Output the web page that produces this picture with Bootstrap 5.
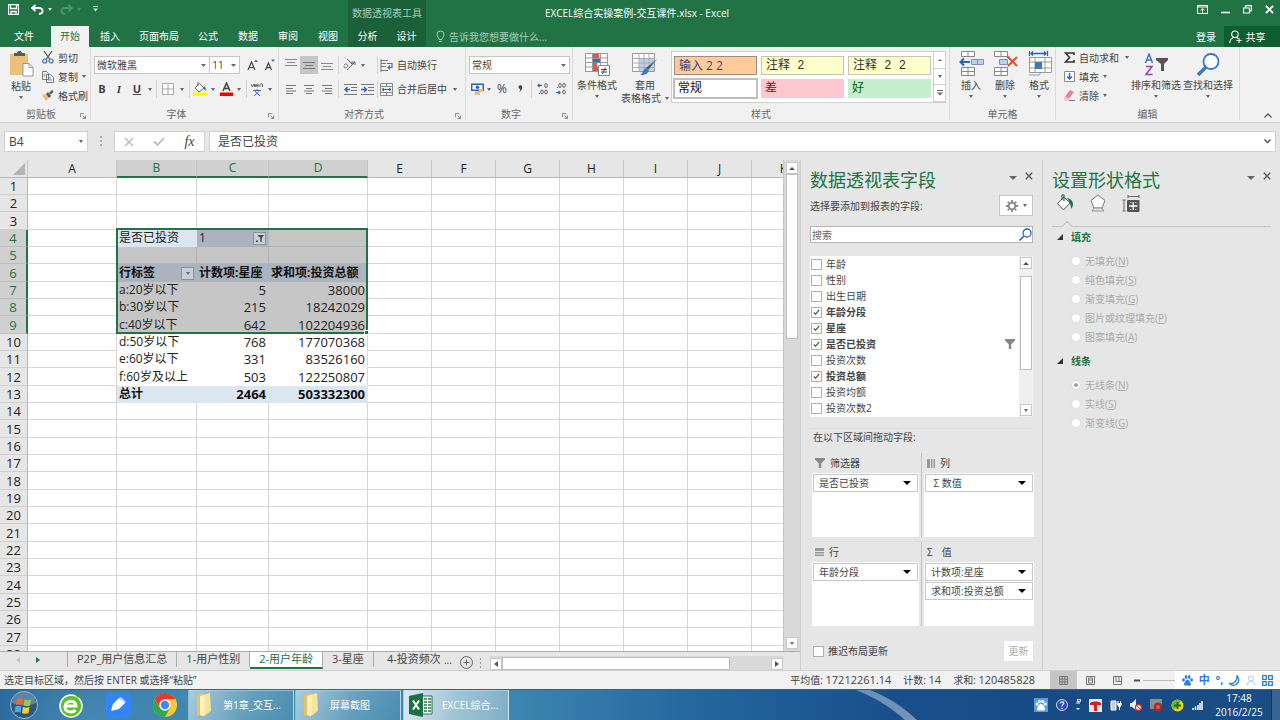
<!DOCTYPE html>
<html lang="zh-CN">
<head>
<meta charset="utf-8">
<meta name="viewport" content="width=device-width, initial-scale=1">
<title>EXCEL综合实操案例-交互课件.xlsx - Excel</title>
<link href="https://cdn.jsdelivr.net/npm/bootstrap@5.3.0/dist/css/bootstrap.min.css" rel="stylesheet">
<style>
:root{--xl:#217346;--xl-dark:#0f5c30;--ink:#444;--pane:#e6e6e6;--rib:#f1f1f1;--rule:#d2d2d2}
body{font-family:"Open Sans","Noto Sans CJK SC",sans-serif;font-size:10px;line-height:16px;color:var(--ink);background:var(--pane)}
.app{height:100vh;min-width:1280px}
.flex-none{flex:none}
svg{display:block;flex:none}
.btn{--bs-btn-padding-x:0px;--bs-btn-padding-y:0px;--bs-btn-font-size:10px;--bs-btn-line-height:16px;--bs-btn-border-width:0px;--bs-btn-border-radius:0px;--bs-btn-color:var(--ink);display:inline-flex;align-items:center;justify-content:center;flex:none}
.caret{width:0;height:0;border:2px solid transparent;border-top:3px solid #666;border-bottom:0;flex:none;margin:0 auto}
.caret-lg{border-width:4px 4px 0}
.s8{width:8px}.s10{width:10px}.s16{width:16px}.s18{width:18px}
.s8,.s10,.s16,.s18{flex:none}
.sep{width:5px;height:18px;flex:none;background:linear-gradient(#d5d5d5,#d5d5d5) 2px 0/1px 100% no-repeat}

/* title bar and tabs */
.titlebar{background:var(--xl);color:#fff;height:26px}
.titlebar .caret{border-top-color:#cfe3d8}
.tabs{background:var(--xl);height:21px}
.tabs .nav-link{padding:0;width:40px;line-height:21px;color:#fff;text-align:center;border-radius:0;font-size:10px}
.tabs .nav-link.wide{width:58px}
.tabs .nav-link.file{width:48px;margin-right:3px}
.tabs .nav-link.active{background:var(--rib);color:var(--xl);width:38px;margin-right:1px}
.ctx{background:#1a6039}
.tabs .ctx .nav-link{width:39px}
.ctx-title{width:78px;color:#a9cdb8;line-height:26px}
.tell{color:#a9cdb8;margin-left:10px}
.share{background:var(--xl-dark);width:56px;padding-right:10px}
.side{flex:1 1 0}
.quick{width:348px}
.winbtns{gap:13px;padding-right:6px}

/* ribbon */
.ribbon{background:var(--rib);height:76px;border-bottom:1px solid #d0d0d0}
.group{border-right:1px solid #dadada;margin-bottom:3px;height:73px;position:relative}
.group-body{height:60px;padding-top:1px}
.group-name{line-height:14px;color:#666;text-align:center}
.launch{position:absolute;right:4px;bottom:1px}
.g-clip{width:91px}.g-font{width:188px}.g-align{width:187px}.g-num{width:107px}.g-style{width:377px}.g-cell{width:106px}.g-edit{width:184px}
.rows{padding:6px 0 0 3px}
.rrow{height:24px;display:flex;align-items:center}
.rrow .fw-bold{font-size:11px}
.crow{height:19px;display:flex;align-items:center;gap:4px}
.pick{appearance:none;border:1px solid #c6c6c6;background:#fff url("data:image/svg+xml,%3Csvg xmlns='http://www.w3.org/2000/svg' width='5' height='3'%3E%3Cpath d='M0 0h5L2.500 3z' fill='%23666'/%3E%3C/svg%3E") right 3px center no-repeat;height:18px;line-height:16px;padding:0 2px;font-size:10px;color:var(--ink);border-radius:0}
.w-name{width:117px}.w-size{width:31px;margin-left:-1px}.w-num{width:101px}
.on{background:#c5c5c5}
.big{flex-direction:column;gap:3px;justify-content:flex-start;height:58px;--bs-btn-line-height:13px}
.big-low{padding-top:5px}
.big-mid{padding-top:3px}
.w34{width:34px}.w48{width:48px}.w52{width:52px}
.gallery{background:#fff;border:1px solid #d0d0d0;width:275px;height:52px;margin:3px 0 0 2px}
.swatches{display:grid;grid-template-columns:1fr 1fr 1fr;gap:3px 4px;padding:4px 2px;width:262px}
.swatches .btn{justify-content:flex-start;padding-left:4px;font-size:12px;height:19px;width:100%}
.sw-in{background:#fc9;border:1px solid #9a8c80;color:#3f3f76}
.sw-note{background:#ffc;border:1px solid #c4c4b0;color:#333}
.mono{font-family:"Liberation Mono","Noto Sans CJK SC",monospace}
.sw-norm{outline:2px solid #bfbfbf;outline-offset:-1px;color:#111}
.sw-bad{background:#ffc7ce;color:#9c0006}
.sw-good{background:#c6efce;color:#006100}
.steps{width:12px;border-left:1px solid #d0d0d0}
.steps .btn{flex:1;border-bottom:1px solid #d0d0d0}
.edits{width:66px}
.edits .caret{margin:0 2px}
.percent{font-size:12px}
.italic-serif{font-family:"Liberation Serif",serif}

/* formula bar */
.fbar{height:37px;padding:8px 4px 0}
.fbox{background:#fff;border:1px solid #d0d0d0;height:21px;font-size:12px;line-height:19px;color:var(--ink);border-radius:0}
.fname{width:84px;padding:0 4px}
.ftools{width:91px}
.fx{font-family:"Liberation Serif",serif;font-size:14px}
.fin{font-size:12px;line-height:17px;outline:0;color:var(--ink);padding-top:0;padding-bottom:0}

/* worksheet */
.sheetwrap{overflow:hidden;background:#fff;min-height:0}
.sheet{table-layout:fixed;width:0;border-collapse:separate;border-spacing:0;color:#222;font-size:12px}
.sheet th,.sheet td{padding:0 2px;height:17px;line-height:16px;border-right:1px solid #d6d6d6;border-bottom:1px solid #d6d6d6;white-space:nowrap;font-weight:400;overflow:hidden}
.sheet tr:nth-child(3n) th,.sheet tbody tr:nth-child(3n) td{height:18px}
.sheet thead th{height:18px;background:var(--pane);text-align:center;font-size:12px;line-height:14px;border-right-color:#c4c4c4;border-bottom-color:#b5b5b5}
.sheet tbody th{background:var(--pane);text-align:center;font-size:13px;border-right-color:#b5b5b5;border-bottom-color:#cfcfcf}
.sheet thead th.hot{background:#d0d0d0;color:var(--xl);border-bottom:2px solid var(--xl)}
.sheet tbody th.hot{background:#d0d0d0;color:var(--xl);border-right:2px solid var(--xl);border-bottom-color:#bdbdbd}
.sheet td.num{text-align:right;font-size:13px}
.sheet td.sel{background:#c6c6c6;border-color:#b4b4b4}
.sheet td.plain{border-color:transparent}
.sheet td.selplain{background:#c6c6c6;border-color:#c6c6c6}
.sheet td.head{background:#abb3be;border-color:#abb3be;font-weight:700;color:#111}
.sheet td.filt{background:#abb3be;border-color:#abb3be}
.sheet td.cur{background:#dce6f1;border-color:#dce6f1;overflow:visible;position:relative}
.sheet td.tot{background:#dce6f1;border-color:#dce6f1;font-weight:700;color:#111}
.sheet td.endcol{border-right-color:#d6d6d6}
.selbox{position:absolute;left:-1px;top:-2px;width:252px;height:106px;border:2px solid var(--xl);pointer-events:none;z-index:2}
.selbox::after{content:"";position:absolute;right:-3px;bottom:-3px;width:5px;height:5px;background:var(--xl);border:1px solid #fff}
.dd{width:13px;height:13px;border:1px solid #8d949d;background:#c9ced4;margin-top:2px}
.corner{border:6px solid transparent;border-right-color:#b4b4b4;border-bottom-color:#b4b4b4;width:0;margin-left:auto}
.vbar{width:17px;background:#d9d9d9;border-left:1px solid #c6c6c6;padding:2px;flex:none;display:flex;flex-direction:column}
.sb{background:#fff;border:1px solid #c8c8c8;width:12px;height:12px}
.thumb{background:#fff;border:1px solid #bdbdbd}
.vthumb{height:165px;width:12px}
.sheettabs{height:19px;border-top:1px solid #ababab;width:100%}
.sheettabs .nav-link{padding:0 9px;font-size:11px;line-height:14px;height:15px;color:var(--ink);border-radius:0;border-right:1px solid #ababab;white-space:nowrap}
.sheettabs .nav-link.active{height:17px;background:#fff;color:var(--xl);border-bottom:2px solid var(--xl)}
.tabnav{width:68px;border-right:1px solid #ababab;height:15px;flex:none}
.clip{overflow:hidden;width:53px;margin-left:13px}
.hbar{width:293px;height:15px;background:#d9d9d9;flex:none;margin-right:17px}
.hthumb{width:228px;height:13px}

/* task panes */
.tpane{border-left:1px solid #cfcfcf;background:var(--pane);flex:none;padding:8px 9px 0}
.pane-a{width:242px}
.pane-b{width:238px}
.tpane h2{font-size:18px;line-height:24px;color:var(--xl);margin:0;font-weight:400}
.gear{width:34px;height:21px;background:#fff;border:1px solid #c6c6c6;gap:5px}
.gearrow{margin-top:3px}
.search{border:1px solid #b5b5b5;background:#fff;height:17px;margin-top:10px}
.search input{border:0;outline:0;padding:0 1px;font-size:10px;line-height:14px;width:100%;background:none}
.search input::placeholder{color:#666}
.fields{background:#fff;height:161px;margin-top:13px}
.fields .form-check{padding:0 0 0 1px;margin:0;min-height:16px;display:flex;align-items:center;gap:4px}
.form-check-input{float:none!important;margin:0!important;border-radius:0!important;width:11px;height:11px;border:1px solid #b0b0b0;background-color:#fff;flex:none}
.form-check-input:checked[type=checkbox]{background-color:#fff;border-color:#b0b0b0;background-image:url("data:image/svg+xml,%3Csvg xmlns='http://www.w3.org/2000/svg' viewBox='0 0 10 10'%3E%3Cpath d='M2 5l2 2 4-5' fill='none' stroke='%23444' stroke-width='1.200'/%3E%3C/svg%3E")}
:checked+label{font-weight:700}
.fscroll{width:14px;background:#efefef;padding:1px}
.fthumb{height:94px;margin-top:7px}
.hr-a{border-top:1px solid #c3c3c3;margin:0}
.hr-lite{margin-top:11px;opacity:.15}
.hr-mid{margin-top:4px}
.zone-lead{padding-left:3px;margin-bottom:8px}
.zones{display:grid;grid-template-columns:107px 110px;column-gap:5px;margin-left:2px;background:linear-gradient(#c3c3c3,#c3c3c3) 109px 0/1px 100% no-repeat}
.zone-name{height:20px;padding:0 0 0 3px;gap:5px}
.zone-box{background:#fff;height:64px;padding:1px 1px 0}
.zone-box .btn{width:100%;height:18px;border:1px solid #c8c8c8;justify-content:space-between;padding:0 6px 0 5px;margin-bottom:1px}
.zone-box .caret{border-top-color:#000;margin:0}
.upd{margin-top:15px;padding-left:3px}
.update{background:#fff;color:#ababab;width:29px;height:20px}
.modes{margin:2px 0 8px}
.props .form-check{padding:0 0 0 18px;margin:0;min-height:0;height:19px;display:flex;align-items:center;gap:4px;color:#ababab}
.props .form-check-input{border-radius:50%!important;border-color:#e0e0e0;width:10px;height:10px;opacity:1}
.props .form-check-input:checked{background-color:#fff;border-color:#ddd;background-image:radial-gradient(#999 0 1.5px,transparent 2px)}
.props label{opacity:1!important;font-weight:400!important}
.sect{font-weight:700;color:var(--xl);height:18px;padding-left:5px}
.tri{width:0;border:3px solid transparent;border-right-color:#333;border-bottom-color:#333}
.plist{padding:5px 0 6px 1px}

/* status bar */
.status{height:19px;background:#f1f1f1;border-top:1px solid #d0d0d0;padding-left:4px}
.sums b{font-weight:400;font-size:11px}
.sums{gap:12px;padding-right:15px}
.vw{width:27px;height:18px}
.ime{width:105px;height:19px;background:#fff;color:#2d7be0;font-weight:700;font-size:11px}

/* taskbar */
.taskbar{height:31px;border-top:1px solid #35607f;background:radial-gradient(ellipse 90px 60px at 90px 100%,#5595bb88,transparent),linear-gradient(90deg,#2d6b9c,#4189b0 15%,#3c86b1 40%,#24659c 55%,#184f8b 70%,#184a83 85%,#1a4c85);color:#fff;overflow:hidden}
.pin{width:47px;height:31px}
.task{width:106px;height:31px;border:1px solid #cfe4f088;background:linear-gradient(115deg,#a9cbdc,#669fbd 55%,#4a8db0);color:#fff!important;gap:9px;justify-content:flex-start;padding-left:5px;margin-right:1px}
.task.now{background:linear-gradient(100deg,#dbe8ef,#a1c3d6 50%,#7fafc8);margin-left:1px}
.streak{margin-right:18px}
.clock{width:56px;line-height:14px;text-align:center}
.desk{width:9px;border-left:1px solid #0d3560;background:#ffffff22}
</style>
</head>
<body>
<svg width="0" height="0" class="position-absolute" aria-hidden="true">
<symbol id="i-launch" viewBox="0 0 7 7"><path d="M.500 5V.500H5M3 3l3 3M6.500 3v3.500H3" fill="none" stroke="#777"/></symbol>
<symbol id="i-funnel" viewBox="0 0 10 10"><path d="M0 0h10v1.500L6.200 5.500V10H3.800V5.500L0 1.500z"/></symbol>
<symbol id="i-folder" viewBox="0 0 20 26"><path d="M3 3l7-2v20l-7 3z" fill="#e4c161"/><path d="M6 4l10-3 1 18-7 5-4-1z" fill="#f7e39a"/><path d="M6 4l5-1v18l-1 3-4-1z" fill="#fdf0b8"/></symbol>
<symbol id="i-x" viewBox="0 0 10 10"><path d="M1 1l8 8M9 1L1 9"/></symbol>
</svg>
<div class="app d-flex flex-column">

<header class="titlebar d-flex flex-none">
  <div class="side d-flex align-items-center">
    <div class="quick d-flex align-items-center ps-2 pb-2">
      <button class="btn" aria-label="保存"><svg width="11" height="11" viewBox="0 0 11 11"><path d="M.500.500h10v10h-10zM2.500.500v4h6v-4M3 10.500V7.500h5v3" fill="none" stroke="#fff" stroke-width="1.300"/></svg></button>
      <button class="btn ms-2 ps-1" aria-label="撤销"><svg width="13" height="11" viewBox="0 0 13 11"><path d="M4.500 1L1.200 4l3.300 3M1.500 4H8c5 0 4.500 6 0 6" fill="none" stroke="#fff" stroke-width="1.800"/></svg><span class="caret ms-1"></span></button>
      <button class="btn ms-2" aria-label="恢复"><svg width="13" height="11" viewBox="0 0 13 11"><path d="M8.500 1l3.300 3-3.300 3M11.500 4H5C0 4 .500 10 5 10" fill="none" stroke="#4f9470" stroke-width="1.800"/></svg><svg class="ms-1" width="4" height="3"><path d="M0 0h4L2 3z" fill="#4f9470"/></svg></button>
      <button class="btn ms-2 ps-1" aria-label="自定义"><svg width="5" height="6" viewBox="0 0 5 6"><path d="M0 .500h5" stroke="#cfe3d8"/><path d="M0 2.500h5L2.500 5.500z" fill="#cfe3d8"/></svg></button>
    </div>
    <div class="ctx ctx-title text-center align-self-stretch">数据透视表工具</div>
  </div>
  <div class="align-self-center">EXCEL综合实操案例-交互课件.xlsx - Excel</div>
  <div class="side d-flex align-items-center justify-content-end winbtns pb-2">
    <button class="btn" aria-label="功能区显示选项"><svg width="11" height="9" viewBox="0 0 11 9"><path d="M.500.500h10v8h-10zM.500 2h10M5.500 8V4M3.500 5.500l2-2 2 2" fill="none" stroke="#fff"/></svg></button>
    <button class="btn" aria-label="最小化"><svg width="9" height="9" viewBox="0 0 9 9"><path d="M0 7.500h9" stroke="#fff" stroke-width="1.500"/></svg></button>
    <button class="btn" aria-label="还原"><svg width="9" height="9" viewBox="0 0 9 9"><path d="M.500 3h6v5h-6zM2.500 3V.700h6v5h-2" fill="none" stroke="#fff" stroke-width="1.200"/></svg></button>
    <button class="btn" aria-label="关闭"><svg width="9" height="9" fill="none" stroke="#fff" stroke-width="2"><use href="#i-x"/></svg></button>
  </div>
</header>

<nav class="tabs d-flex align-items-stretch flex-none">
  <a href="#" class="nav-link file">文件</a>
  <a href="#" class="nav-link active">开始</a>
  <a href="#" class="nav-link">插入</a>
  <a href="#" class="nav-link wide">页面布局</a>
  <a href="#" class="nav-link">公式</a>
  <a href="#" class="nav-link">数据</a>
  <a href="#" class="nav-link">审阅</a>
  <a href="#" class="nav-link">视图</a>
  <div class="ctx d-flex"><a href="#" class="nav-link">分析</a><a href="#" class="nav-link">设计</a></div>
  <button class="btn tell gap-1"><svg width="9" height="13" viewBox="0 0 9 13"><path d="M3 9.500C3 7.500 1 7 1 4.500a3.500 3.500 0 017 0C8 7 6 7.500 6 9.500zM3 11.500h3" fill="none" stroke="#a9cdb8"/></svg>告诉我您想要做什么...</button>
  <button class="btn text-white ms-auto me-2">登录</button>
  <button class="btn share text-white gap-1"><svg width="13" height="13" viewBox="0 0 13 13"><path d="M6 1a3 3 0 110 6.500A3 3 0 016 1zM.700 13c.300-3 2-5 4-5.500M7 7.500c1 .200 1.500.500 2 1M10 8v5M7.500 10.500h5" fill="none" stroke="#fff" stroke-width="1.100"/></svg>共享</button>
</nav>

<section class="ribbon d-flex flex-none">
  <div class="group g-clip">
    <div class="group-body d-flex ps-1 gap-1">
      <button class="btn big big-mid w34"><svg width="25" height="26" viewBox="0 0 25 26"><path d="M1 3h18v21H1z" fill="#eac17b"/><path d="M5 5V2h3l1-2h3l1 2h3v3z" fill="#5a5a5a"/><path d="M14 12.500h6l4 4V25H14z" fill="#fff" stroke="#999"/><path d="M20 12.500v4h4" fill="none" stroke="#999"/></svg><span>粘贴</span><span class="caret"></span></button>
      <div>
        <div class="crow"><button class="btn gap-1"><svg width="12" height="13" viewBox="0 0 12 13"><path d="M2 0l6 8.500M10 0L4 8.500" stroke="#555" stroke-width="1.300"/><g fill="none" stroke="#3a6fb0" stroke-width="1.200"><circle cx="2.800" cy="10" r="2"/><circle cx="9" cy="10" r="2"/></g></svg>剪切</button></div>
        <div class="crow"><button class="btn gap-1"><svg width="12" height="12" viewBox="0 0 12 12"><path d="M.500.500h4l2 2v6h-6zM4.500 3.500h4l3 3v5h-7z" fill="#fff" stroke="#777"/><path d="M1.500 3h2M1.500 5h2M6 7h3M6 9h4" stroke="#4a7ebb"/></svg>复制</button><span class="caret mx-0"></span></div>
        <div class="crow"><button class="btn gap-1"><svg width="12" height="11" viewBox="0 0 12 11"><path d="M0 5l4-1 3 4-3 3z" fill="#eac17b"/><path d="M4 4l2-2 3 4-2 2zM7 3l3-3 1.500 1.500-2.500 3z" fill="#555"/></svg>格式刷</button></div>
      </div>
    </div>
    <div class="group-name pe-2">剪贴板</div><svg class="launch" width="6" height="6"><use href="#i-launch"/></svg>
  </div>

  <div class="group g-font">
    <div class="group-body rows">
      <div class="rrow"><select class="pick w-name" aria-label="字体"><option>微软雅黑</option></select><select class="pick w-size" aria-label="字号"><option>11</option></select>
        <button class="btn s18 ms-1" aria-label="增大字号"><svg width="12" height="12" viewBox="0 0 12 12"><path d="M1 11L4.500 3 8 11M2.200 8.500h4.600" fill="none" stroke="#444" stroke-width="1.200"/><path d="M7 3l2-2.500L11 3z" fill="#3a6fb0"/></svg></button>
        <button class="btn s16" aria-label="减小字号"><svg width="12" height="12" viewBox="0 0 12 12"><path d="M1.500 11l3-7 3 7M2.500 8.700h4" fill="none" stroke="#444" stroke-width="1.200"/><path d="M7 .500h4L9 3z" fill="#3a6fb0"/></svg></button></div>
      <div class="rrow"><button class="btn s16 fw-bold">B</button><button class="btn s18 fst-italic fw-bold italic-serif">I</button><button class="btn s18 fw-bold text-decoration-underline">U</button><span class="s8 d-flex"><i class="caret"></i></span><span class="sep"></span>
        <button class="btn s18" aria-label="边框"><svg width="12" height="12" viewBox="0 0 12 12"><path d="M.500.500h11v11H.500zM6 0v12M0 6h12" fill="#fff" stroke="#aaa"/></svg></button><span class="s10 d-flex"><i class="caret"></i></span><span class="sep"></span>
        <button class="btn s16" aria-label="填充颜色"><svg width="14" height="14" viewBox="0 0 14 14"><path d="M2 6l4.500-4.500L11 6 6 10z" fill="#fff" stroke="#666"/><path d="M5 0v4" stroke="#666"/><path d="M11 4c2 1 2 3 1.500 5-1-.500-2-2-1.500-5z" fill="#3a6fb0"/><path d="M0 10.500h14V14H0z" fill="#ff0"/></svg></button><span class="s10 d-flex"><i class="caret"></i></span>
        <button class="btn s16" aria-label="字体颜色"><svg width="13" height="14" viewBox="0 0 13 14"><path d="M3 9l3.500-8L10 9M4.200 6.500h4.600" fill="none" stroke="#444" stroke-width="1.500"/><path d="M0 10.500h13V14H0z" fill="#e00"/></svg></button><span class="s10 d-flex"><i class="caret"></i></span><span class="sep"></span>
        <button class="btn s16" aria-label="拼音"><svg width="12" height="13" viewBox="0 0 12 13"><path d="M0 1l1.500 3L3 1l1 3 1-3M5.500 2.500h2c0-2-2-2-2 0s1.500 1.500 2 1M9 4V1.500c1-1 2.500-.500 2.500 0V4" fill="none" stroke="#555" stroke-width=".900"/><path d="M2 7.500h8M6 6v1.500M3.500 8L9 13M8.500 8L3 13" stroke="#3a6fb0" fill="none"/></svg></button><span class="s10 d-flex"><i class="caret"></i></span></div>
    </div>
    <div class="group-name pe-3">字体</div><svg class="launch" width="6" height="6"><use href="#i-launch"/></svg>
  </div>

  <div class="group g-align">
    <div class="group-body rows">
      <div class="rrow"><button class="btn s18" aria-label="顶端对齐"><svg width="12" height="12" viewBox="0 0 12 12"><path d="M0 .500h12M2 3.500h8M0 6.500h12" stroke="#888"/></svg></button><button class="btn s18 on" aria-label="垂直居中"><svg width="12" height="18" viewBox="0 0 12 18"><path d="M0 6.500h12M2 9.500h8M0 12.500h12" stroke="#777"/></svg></button><button class="btn s18" aria-label="底端对齐"><svg width="12" height="12" viewBox="0 0 12 12"><path d="M0 4.500h12M2 7.500h8M0 10.500h12" stroke="#888"/></svg></button><span class="sep"></span>
        <button class="btn s18" aria-label="方向"><svg width="14" height="12" viewBox="0 0 14 12"><path d="M1 6c2-2 3-1 4 1M1 7c0 2 2 3 4 0M4 0l5 5M7 4c2-2 3 0 2 2M4 11l8-8M12 6V3H9" fill="none" stroke="#666"/></svg></button><span class="s8 d-flex"><i class="caret"></i></span><span class="s8"></span><span class="sep"></span>
        <button class="btn gap-1"><svg width="13" height="13" viewBox="0 0 13 13"><path d="M1 0v13M1 1.500h7M1 4.500h5M1 7.500h5M1 11.500h7" fill="none" stroke="#777"/><path d="M7 4.500h5v4H8M10 6.500L8 8.500l2 2" fill="none" stroke="#3a6fb0" stroke-width="1.200"/></svg>自动换行</button></div>
      <div class="rrow"><button class="btn s18" aria-label="左对齐"><svg width="10" height="9" viewBox="0 0 10 9"><path d="M0 .500h10M0 3.500h7M0 6h10M0 8.500h7" stroke="#777"/></svg></button><button class="btn s18" aria-label="居中"><svg width="10" height="9" viewBox="0 0 10 9"><path d="M0 .500h10M2 3.500h6M0 6h10M2 8.500h6" stroke="#777"/></svg></button><button class="btn s18" aria-label="右对齐"><svg width="10" height="9" viewBox="0 0 10 9"><path d="M0 .500h10M3 3.500h7M0 6h10M3 8.500h7" stroke="#777"/></svg></button><span class="sep"></span>
        <button class="btn s18" aria-label="减少缩进"><svg width="13" height="11" viewBox="0 0 13 11"><path d="M0 .500h13M7 3.500h6M7 6.500h6M0 10.500h13" stroke="#777"/><path d="M6 5.500H1M3.500 3L1 5.500 3.500 8" fill="none" stroke="#2d65ab" stroke-width="1.400"/></svg></button><button class="btn s16" aria-label="增加缩进"><svg width="13" height="11" viewBox="0 0 13 11"><path d="M0 .500h13M7 3.500h6M7 6.500h6M0 10.500h13" stroke="#777"/><path d="M0 5.500h5M3 3l2.500 2.500L3 8" fill="none" stroke="#2d65ab" stroke-width="1.400"/></svg></button><span class="sep"></span>
        <button class="btn gap-1"><svg width="13" height="13" viewBox="0 0 13 13"><path d="M.500.500h12v12H.500zM.500 3.500h12M.500 9.500h12M6.500.500v3M6.500 9.500v3" fill="none" stroke="#888"/><path d="M2 6.500h9M4 5L2 6.500 4 8M9 5l2 1.500L9 8" fill="none" stroke="#2d65ab"/></svg>合并后居中</button><span class="s16 d-flex"><i class="caret"></i></span></div>
    </div>
    <div class="group-name pe-3">对齐方式</div><svg class="launch" width="6" height="6"><use href="#i-launch"/></svg>
  </div>

  <div class="group g-num">
    <div class="group-body rows">
      <div class="rrow"><select class="pick w-num" aria-label="数字格式"><option>常规</option></select></div>
      <div class="rrow"><button class="btn s16" aria-label="会计数字格式"><svg width="13" height="13" viewBox="0 0 13 13"><path d="M.700 1.200h11.500v6H.700z" fill="#fff" stroke="#2d65ab" stroke-width="1.500"/><circle cx="6.500" cy="4.200" r="1.800" fill="#2d65ab"/><path d="M4 8h5v4H4zM8 6h4v3H8z" fill="#eac17b"/></svg></button><span class="s8 d-flex"><i class="caret"></i></span>
      <button class="btn s18 percent">%</button><button class="btn s18" aria-label="千位分隔"><svg width="5" height="8" viewBox="0 0 5 8"><path d="M.500 2a1.800 1.800 0 013.700 0c0 2-1 4-3 5 1-1.500 1-2.500.800-3A1.800 1.800 0 01.500 2z" fill="#444"/></svg></button><span class="sep"></span>
      <button class="btn s18" aria-label="增加小数位数"><svg width="12" height="12" viewBox="0 0 12 12"><path d="M5 2.500H1M2.500 1L1 2.500 2.500 4" fill="none" stroke="#2d65ab" stroke-width="1.200"/><g fill="none" stroke="#666"><ellipse cx="9" cy="2.500" rx="1.300" ry="2"/><ellipse cx="5" cy="9" rx="1.300" ry="2"/><ellipse cx="9" cy="9" rx="1.300" ry="2"/><path d="M2 10.500h1"/></g></svg></button><button class="btn s18" aria-label="减少小数位数"><svg width="12" height="12" viewBox="0 0 12 12"><path d="M1 9.500h4M3.500 8L5 9.500 3.500 11" fill="none" stroke="#2d65ab" stroke-width="1.200"/><g fill="none" stroke="#666"><ellipse cx="5" cy="2.500" rx="1.300" ry="2"/><ellipse cx="9" cy="2.500" rx="1.300" ry="2"/><ellipse cx="9" cy="9" rx="1.300" ry="2"/><path d="M2 4.500h1"/></g></svg></button></div>
    </div>
    <div class="group-name pe-3">数字</div><svg class="launch" width="6" height="6"><use href="#i-launch"/></svg>
  </div>

  <div class="group g-style">
    <div class="group-body d-flex">
      <button class="btn big big-low w48"><svg width="25" height="23" viewBox="0 0 25 23"><path d="M.500.500h22v18H.500zM7.500 0v19M15.500 0v19M0 5h23M0 9.500h23M0 14h23" fill="#fff" stroke="#999"/><path d="M8 1h6v4H8zM8 10h4v4H8zM8 14h5v4H8z" fill="#e0584a"/><path d="M8 5.500h7v4H8z" fill="#3a6fb0"/><path d="M13.500 12.500h11v10h-11z" fill="#fff" stroke="#888"/><path d="M16 16.500h6M16 19h6M20.500 14.500l-3 6.500" stroke="#444"/></svg><span>条件格式</span><span class="caret"></span></button>
      <button class="btn big big-low w48"><svg width="26" height="23" viewBox="0 0 26 23"><path d="M.500.500h22v18H.500z" fill="#fff" stroke="#999"/><path d="M7 6h15v12H7z" fill="#bcd2ea"/><path d="M7 0v19M12 0v19M17 0v19M0 5.500h23M0 10h23M0 14.500h23" stroke="#aab"/><path d="M25 6l-9 11-2-2z" fill="#555"/><path d="M14 15l3 3c-2 4-6 4-9 4 3-1 3-6 6-7z" fill="#3a78c0"/></svg><span class="text-nowrap">套用<br><span class="d-flex align-items-center gap-1">表格格式<i class="caret"></i></span></span></button>
      <div class="gallery d-flex flex-none">
        <div class="swatches"><button class="btn sw-in">输入 2 2</button><button class="btn sw-note mono">注释 2</button><button class="btn sw-note mono">注释 2 2</button><button class="btn sw-norm">常规</button><button class="btn sw-bad">差</button><button class="btn sw-good">好</button></div>
        <div class="steps d-flex flex-column"><button class="btn" aria-label="上"><svg width="4" height="2"><path d="M0 2h4L2 0z" fill="#666"/></svg></button><button class="btn" aria-label="下"><i class="caret"></i></button><button class="btn" aria-label="更多"><svg width="6" height="6"><path d="M0 .500h6" stroke="#666"/><path d="M0 2.500h6L3 5.500z" fill="#666"/></svg></button></div>
      </div>
    </div>
    <div class="group-name">样式</div>
  </div>

  <div class="group g-cell">
    <div class="group-body d-flex ps-1 pe-1">
      <button class="btn big big-mid w34"><svg width="25" height="25" viewBox="0 0 25 25"><g fill="#fff" stroke="#888"><path d="M2.500.500h13v5h-13zM9 .500v5M2.500 16.500h13v8h-13zM9 16.500v8M2.500 20.500h13"/></g><path d="M12.500 8.500h12v5h-12zM18.500 8.500v5" fill="#bcd2ea" stroke="#7a92b5"/><path d="M11 11H2M5 7.500L1.500 11 5 14.500" fill="none" stroke="#2d65ab" stroke-width="2"/></svg><span>插入</span><span class="caret"></span></button>
      <button class="btn big big-mid w34"><svg width="25" height="25" viewBox="0 0 25 25"><g fill="#fff" stroke="#888"><path d="M1.500.500h13v5h-13zM8 .500v5M1.500 16.500h13v8h-13zM8 16.500v8M1.500 20.500h13"/></g><path d="M6.500 8.500h8v5h-8z" fill="#bcd2ea" stroke="#7a92b5"/><path d="M14 5l10 10M24 6l-9 9" fill="none" stroke="#d9532c" stroke-width="2"/></svg><span>删除</span><span class="caret"></span></button>
      <button class="btn big big-mid w34"><svg width="25" height="25" viewBox="0 0 25 25"><path d="M2.500 6.500h22v15h-22zM8 6v16M18 6v16M2 11h23M2 17h23M2 24h10l2-3" fill="#fff" stroke="#999"/><path d="M8 11h7v7H8z" fill="#3a78c0"/><path d="M2.500 0v5M20.500 0v5M4 2.500h15M6 .500l-2 2 2 2M17 .500l2 2-2 2" fill="none" stroke="#2d65ab" stroke-width="1.300"/></svg><span>格式</span><span class="caret"></span></button>
    </div>
    <div class="group-name">单元格</div>
  </div>

  <div class="group g-edit">
    <div class="group-body d-flex ps-2">
      <div class="edits flex-none">
        <div class="crow"><button class="btn gap-1"><svg width="11" height="11" viewBox="0 0 11 11"><path d="M10 3V1H1.500l4 4.500-4 4.500H10V8" fill="none" stroke="#333" stroke-width="1.600"/></svg>自动求和</button><span class="caret"></span></div>
        <div class="crow"><button class="btn gap-1"><svg width="11" height="11" viewBox="0 0 11 11"><path d="M.500.500h10v10H.500z" fill="#fff" stroke="#888"/><path d="M5.500 2v6M3 5.500L5.500 8 8 5.500" fill="none" stroke="#2d65ab" stroke-width="1.500"/></svg>填充</button><span class="caret mx-0"></span></div>
        <div class="crow"><button class="btn gap-1"><svg width="11" height="11" viewBox="0 0 11 11"><path d="M0 8l6-8 4 2-6 8-3 .500z" fill="#ea7f92"/><path d="M0 8l1-1.500 4 2-1 2H1z" fill="#f7c4cc"/><path d="M5 10.500h6" stroke="#777"/></svg>清除</button><span class="caret mx-0"></span></div>
      </div>
      <button class="btn big big-low w52"><svg width="25" height="23" viewBox="0 0 25 23"><path d="M1.500 10L5 1l3.500 9M2.500 7h5" fill="none" stroke="#3a78c0" stroke-width="1.500"/><path d="M2 13.500h6L2 21.500h6.500" fill="none" stroke="#9245b5" stroke-width="1.500"/><path d="M12 5h12v2l-4 4v7h-3v-7l-5-4z" fill="#555"/></svg><span class="text-nowrap">排序和筛选</span><span class="caret"></span></button>
      <button class="btn big big-low w52"><svg width="25" height="23" viewBox="0 0 25 23"><circle cx="15" cy="8.500" r="7.500" fill="#fff" stroke="#3a78c0" stroke-width="1.800"/><path d="M10 14l-8 8" stroke="#3a78c0" stroke-width="3.500"/></svg><span class="text-nowrap">查找和选择</span><span class="caret"></span></button>
    </div>
    <div class="group-name">编辑</div>
  </div>
  <button class="btn ms-auto align-self-end me-2 pb-1" aria-label="折叠功能区"><svg width="8" height="5"><path d="M.500 4.500L4 1l3.500 3.500" fill="none" stroke="#555" stroke-width="1.300"/></svg></button>
</section>

<section class="fbar d-flex flex-none">
  <div class="fbox fname d-flex align-items-center justify-content-between"><span>B4</span><span class="caret m-0"></span></div>
  <svg class="mx-2" width="10" height="21"><path d="M5 5v2M5 9v2M5 13v2" stroke="#999" stroke-width="1.500"/></svg>
  <div class="fbox ftools d-flex align-items-center justify-content-around">
    <button class="btn" aria-label="取消"><svg width="10" height="10" fill="none" stroke="#bbb" stroke-width="1.500"><use href="#i-x"/></svg></button>
    <button class="btn" aria-label="输入"><svg width="12" height="9"><path d="M1 4.500l3.500 3.500L11 1" fill="none" stroke="#bbb" stroke-width="1.800"/></svg></button>
    <button class="btn fst-italic fx">fx</button>
  </div>
  <div class="fbox ms-1 flex-fill d-flex align-items-center pe-1"><input class="border-0 flex-fill ps-2 fin" aria-label="编辑栏" value="是否已投资"><svg width="7" height="5"><path d="M.500.500l3 3 3-3" fill="none" stroke="#555" stroke-width="1.500"/></svg></div>
</section>

<main class="d-flex flex-fill overflow-hidden">
  <div class="d-flex flex-column flex-fill overflow-hidden">
    <div class="d-flex flex-fill overflow-hidden">
      <div class="sheetwrap flex-fill">
        <table class="sheet" id="sheet"></table>
      </div>
      <div class="vbar"><div class="sb d-flex align-items-center"><svg class="m-auto" width="6" height="3"><path d="M0 3h6L3 0z" fill="#555"/></svg></div><div class="thumb vthumb"></div><div class="sb d-flex align-items-center mt-auto"><span class="caret"></span></div></div>
    </div>
    <nav class="sheettabs d-flex flex-none align-items-start">
      <div class="tabnav d-flex align-items-center ps-3 gap-3"><svg width="4" height="6"><path d="M4 0v6L0 3z" fill="#c4c4c4"/></svg><svg width="4" height="6"><path d="M0 0v6l4-3z" fill="#217346"/></svg></div>
      <a href="#" class="nav-link">P2P_用户信息汇总</a><a href="#" class="nav-link">1-用户性别</a><a href="#" class="nav-link active">2-用户年龄</a><a href="#" class="nav-link">3-星座</a><div class="clip"><a href="#" class="nav-link p-0 border-0">4-投资频次</a></div><span class="ms-1">...</span>
      <button class="btn ms-2 mt-1" aria-label="新工作表"><svg width="13" height="13" viewBox="0 0 13 13"><path d="M6.500.500a6 6 0 110 12 6 6 0 010-12zM6.500 3.500v6M3.500 6.500h6" fill="none" stroke="#666"/></svg></button>
      <svg class="mt-1 ms-auto me-2" width="3" height="12"><path d="M1.500 2v2M1.500 6v2M1.500 10v2" stroke="#999"/></svg>
      <div class="hbar d-flex mt-1 align-items-center"><div class="sb d-flex align-items-center"><svg class="m-auto" width="4" height="6"><path d="M4 0v6L0 3z" fill="#555"/></svg></div><div class="thumb hthumb"></div><div class="sb d-flex align-items-center ms-auto"><svg class="m-auto" width="4" height="6"><path d="M0 0v6l4-3z" fill="#555"/></svg></div></div>
    </nav>
  </div>

  <aside class="tpane pane-a">
    <div class="d-flex align-items-start"><h2>数据透视表字段</h2><span class="caret caret-lg ms-auto me-2 mt-2"></span><button class="btn mt-1" aria-label="关闭窗格"><svg width="8" height="8" fill="none" stroke="#555" stroke-width="1.600"><use href="#i-x"/></svg></button></div>
    <div class="gearrow d-flex align-items-center justify-content-between"><span>选择要添加到报表的字段:</span>
      <button class="btn gear" aria-label="工具"><svg width="12" height="12" viewBox="0 0 12 12"><circle cx="6" cy="6" r="3.300" fill="none" stroke="#888" stroke-width="1.800"/><path d="M6 0v2M6 10v2M0 6h2M10 6h2M1.800 1.800l1.300 1.300M9 9l1.300 1.300M10.200 1.800L9 3M3 9l-1.300 1.300" stroke="#888" stroke-width="1.800"/></svg><i class="caret m-0"></i></button></div>
    <div class="search d-flex align-items-center"><input aria-label="搜索" placeholder="搜索"><svg width="13" height="13" viewBox="0 0 13 13"><circle cx="8" cy="5" r="4" fill="none" stroke="#2d65ab" stroke-width="1.300"/><path d="M5 8l-4.500 4.500" stroke="#2d65ab" stroke-width="1.600"/></svg></div>
    <div class="fields d-flex">
      <div class="flex-fill" id="fields"></div>
      <div class="fscroll d-flex flex-column"><div class="sb d-flex align-items-center"><svg class="m-auto" width="6" height="3"><path d="M0 3h6L3 0z" fill="#555"/></svg></div><div class="thumb fthumb"></div><div class="sb d-flex align-items-center mt-auto"><span class="caret"></span></div></div>
    </div>
    <hr class="hr-a hr-lite">
    <div class="zone-lead">在以下区域间拖动字段:</div>
    <div class="zones">
      <div><div class="zone-name d-flex align-items-center"><svg width="10" height="10" fill="#888"><use href="#i-funnel"/></svg>筛选器</div><div class="zone-box"><button class="btn">是否已投资<i class="caret caret-lg"></i></button></div></div>
      <div><div class="zone-name d-flex align-items-center"><svg width="8" height="9"><path d="M0 0h3v9H0zM4 0h1.500v9H4zM6.500 0H8v9H6.500z" fill="#999"/></svg>列</div><div class="zone-box"><button class="btn"><span>&nbsp;Σ 数值</span><i class="caret caret-lg"></i></button></div></div>
    </div>
    <hr class="hr-a hr-mid">
    <div class="zones">
      <div><div class="zone-name d-flex align-items-center"><svg width="9" height="8"><path d="M0 0h9v3H0zM0 4h9v1.500H0zM0 6.500h9V8H0z" fill="#999"/></svg>行</div><div class="zone-box"><button class="btn">年龄分段<i class="caret caret-lg"></i></button></div></div>
      <div><div class="zone-name d-flex align-items-center"><span class="pe-1">Σ</span>值</div><div class="zone-box"><button class="btn">计数项:星座<i class="caret caret-lg"></i></button><button class="btn">求和项:投资总额<i class="caret caret-lg"></i></button></div></div>
    </div>
    <div class="d-flex align-items-center justify-content-between upd"><div class="d-flex align-items-center gap-1"><input class="form-check-input" type="checkbox" id="defer"><label for="defer">推迟布局更新</label></div><button class="btn update">更新</button></div>
  </aside>

  <aside class="tpane pane-b">
    <div class="d-flex align-items-start"><h2>设置形状格式</h2><span class="caret caret-lg ms-auto me-2 mt-2"></span><button class="btn mt-1" aria-label="关闭窗格"><svg width="8" height="8" fill="none" stroke="#555" stroke-width="1.600"><use href="#i-x"/></svg></button></div>
    <div class="d-flex gap-3 ps-1 modes">
      <button class="btn" aria-label="填充与线条"><svg width="18" height="18" viewBox="0 0 18 18"><path d="M1.500 9.500L8 3l6 6-6.500 7z" fill="#fff" stroke="#555"/><path d="M6 6V1.500c0-1 2-1 2 0V7" fill="none" stroke="#217346" stroke-width="1.200"/><path d="M11 4c3 .500 6 3 6 6 0 2-1 4-2 5-.500-4-.500-6-4-11z" fill="#217346"/></svg></button>
      <button class="btn" aria-label="效果"><svg width="16" height="18" viewBox="0 0 16 18"><path d="M8 1l7 5.500L12 14H4L1 6.500z" fill="#fff" stroke="#777"/><path d="M4 14l-2 3h12l-2-3z" fill="#ddd" stroke="#999"/></svg></button>
      <button class="btn" aria-label="大小与属性"><svg width="18" height="18" viewBox="0 0 18 18"><path d="M6 2.500h11M6 1v3M17 1v3M2 6v11M.500 6h3M.500 17h3" stroke="#666"/><rect x="5" y="6" width="12.500" height="12" rx="1" fill="#555"/><path d="M11.200 8v8M7 12h8.500" stroke="#fff" stroke-width="1.300"/><path d="M8 8.500h1.500M13 8.500h1.500M8 15.500h1.500M13 15.500h1.500" stroke="#bbb"/></svg></button>
    </div>
    <svg class="w-100" height="8" viewBox="0 0 218 8" preserveAspectRatio="xMinYMid slice"><path d="M0 6.500h10l5-5 5 5h198" fill="none" stroke="#c3c3c3"/></svg>
    <div class="props">
      <div class="sect d-flex align-items-center gap-1"><span class="tri me-1"></span>填充</div>
      <div class="plist" id="fill"></div>
      <div class="sect d-flex align-items-center gap-1"><span class="tri me-1"></span>线条</div>
      <div class="plist" id="line"></div>
    </div>
  </aside>
</main>

<footer class="status d-flex align-items-center flex-none">
  <span>选定目标区域，然后按 ENTER 或选择“粘贴”</span>
  <div class="sums d-flex align-items-center ms-auto"><span>平均值: <b>17212261.14</b></span><span>计数: <b>14</b></span><span>求和: <b>120485828</b></span></div>
  <button class="btn vw on" aria-label="普通"><svg width="9" height="9" viewBox="0 0 9 9"><path d="M.500.500h8v8h-8zM3.200 0v9M5.800 0v9M0 3.200h9M0 5.800h9" fill="none" stroke="#777"/></svg></button>
  <button class="btn vw" aria-label="页面布局"><svg width="9" height="9" viewBox="0 0 9 9"><path d="M.500.500h8v8h-8zM2.500 2h4v5h-4zM3 4h3" fill="none" stroke="#777"/></svg></button>
  <button class="btn vw" aria-label="分页预览"><svg width="9" height="9" viewBox="0 0 9 9"><path d="M.500.500h8v8h-8zM3 0v5.500h3V0M6 5.500h3" fill="none" stroke="#777"/></svg></button>
  <svg width="44" height="3"><path d="M3 1.500h6" stroke="#555" stroke-width="2"/><path d="M12 1.500h32" stroke="#bbb"/></svg>
  <div class="ime d-flex align-items-center justify-content-around px-1">
    <svg width="11" height="11" viewBox="0 0 11 11" fill="#2d7be0"><ellipse cx="1.500" cy="5" rx="1.400" ry="1.700"/><ellipse cx="4" cy="2" rx="1.300" ry="1.900"/><ellipse cx="7.200" cy="2" rx="1.300" ry="1.900"/><ellipse cx="9.600" cy="5" rx="1.400" ry="1.700"/><path d="M5.500 4.500C7 5 9 8 9 9.500c0 1.500-2 1.200-3.500 1S2 11 2 9.500C2 8 4 5 5.500 4.500z"/></svg>
    <span>中</span><span>°,</span>
    <svg width="11" height="11" viewBox="0 0 11 11"><path d="M8 .700c3 3 2 8-2 9.300-2 .600-4 0-5.300-1.500C5 9 8.500 6 8 .700z" fill="none" stroke="#2d7be0" stroke-width="1.300"/></svg>
    <svg width="10" height="11" viewBox="0 0 10 11"><path d="M5 1a2.500 2.500 0 110 5 2.500 2.500 0 010-5zM1 10.500C1 8 3 6.500 5 6.500s4 1.500 4 4" fill="none" stroke="#b5d3f7" stroke-width="1.200"/></svg>
    <svg width="11" height="11" viewBox="0 0 11 11"><path d="M.700.700h3.600v3.600H.700zM6.700.700h3.600v3.600H6.700zM.700 6.700h3.600v3.600H.700zM6.700 6.700h3.600v3.600H6.700z" fill="none" stroke="#2d7be0" stroke-width="1.300"/></svg>
  </div>
</footer>

<footer class="taskbar d-flex align-items-center flex-none">
  <button class="btn pin" aria-label="开始"><svg width="30" height="30" viewBox="0 0 30 30"><circle cx="15" cy="15" r="13.500" fill="#2b587b" stroke="#9dbdd0"/><path d="M3 13a12 12 0 0124 0c-6 3-18 3-24 0z" fill="#7da3ba" opacity=".600"/><path d="M8 9c2-1 4-1 6 0l-1 6c-2-1-4-1-6 0z" fill="#f0643a"/><path d="M15.500 9.500c2 1 4 1 6.500 0l-1 6c-2 1-4 1-6.500 0z" fill="#95cc4a"/><path d="M6.500 16.500c2-1 4-1 6 0l-1 6c-2-1-4-1-6 0z" fill="#4fa8e8"/><path d="M14 17c2 1 4 1 6.500 0l-1 6c-2 1-4 1-6.500 0z" fill="#fccc3c"/></svg></button>
  <button class="btn pin" aria-label="浏览器"><svg width="26" height="26" viewBox="0 0 26 26"><circle cx="13" cy="14" r="11" fill="#5cc02a" stroke="#fff" stroke-width="1.500"/><path d="M7 14h11c0-7-11-6-11 1 0 6 8 6 10.500 3" fill="none" stroke="#fff" stroke-width="3"/><path d="M17 3l6-2-3 5z" fill="#3fa51a"/></svg></button>
  <button class="btn pin" aria-label="记事"><svg width="26" height="26" viewBox="0 0 26 26"><rect x="0" y="1" width="26" height="25" rx="6" fill="#3385f7"/><path d="M6 19l2-7 6-6 6 5-6 6z" fill="#fff"/><path d="M14 6l2-1 5 5-1 1z" fill="#bcdcff"/></svg></button>
  <button class="btn pin" aria-label="Chrome"><svg width="24" height="24" viewBox="0 0 24 24"><circle cx="12" cy="12" r="12" fill="#f9c932"/><path d="M1.600 6A12 12 0 0012 24l5-9a6 6 0 01-10 0z" fill="#2da94f"/><path d="M1.600 6A12 12 0 0122.400 6H12a6 6 0 00-5.500 8z" fill="#e33b2e"/><circle cx="12" cy="12" r="5.500" fill="#fff"/><circle cx="12" cy="12" r="4.200" fill="#4285f4"/></svg></button>
  <button class="btn task"><svg width="20" height="26"><use href="#i-folder"/></svg>第1章_交互...</button>
  <button class="btn task"><svg width="20" height="26"><use href="#i-folder"/></svg>屏幕截图</button>
  <button class="btn task now"><svg width="24" height="24" viewBox="0 0 24 24"><path d="M12 3h11v18H12z" fill="#fff" stroke="#217346"/><path d="M15 6h3M19 6h3M15 9h3M19 9h3M15 12h3M19 12h3M15 15h3M19 15h3M15 18h3M19 18h3" stroke="#217346" stroke-width="1.500"/><path d="M0 3l14-3v24L0 21z" fill="#1d7044"/><path d="M4 7.500l6 9M10 7.500l-6 9" stroke="#fff" stroke-width="2"/></svg>EXCEL综合...</button>
  <svg width="160" height="31" class="ms-auto streak" viewBox="0 0 160 31"><defs><linearGradient id="g1"><stop offset="0" stop-color="#fff" stop-opacity=".350"/><stop offset="1" stop-color="#fff" stop-opacity=".400"/></linearGradient></defs><path d="M0 0h14c18 7 35 18 48 31H50C36 18 20 8 0 0z" fill="url(#g1)"/></svg>
  <div class="d-flex align-items-center gap-2">
    <svg width="14" height="14" viewBox="0 0 14 14"><path d="M0 0h14v14H0z" fill="#5b9fe0"/><g fill="#fff"><circle cx="3" cy="6" r="1.500"/><circle cx="5.500" cy="3.500" r="1.500"/><circle cx="8.800" cy="3.500" r="1.500"/><circle cx="11.200" cy="6" r="1.500"/><path d="M7 6c2 0 4 3 4 5s-2 1.500-4 1.200C5 12.500 3 13 3 11s2-5 4-5z"/></g></svg>
    <svg width="12" height="12" viewBox="0 0 12 12"><circle cx="6" cy="6" r="5.500" fill="#2748c8" stroke="#cdd9f5"/><path d="M4.300 4.500C4.300 2 8 2.500 7.700 4.500 7.500 5.500 6 5.500 6 7.500M6 8.800v1.200" stroke="#fff" stroke-width="1.200" fill="none"/></svg>
    <svg width="5" height="12"><path d="M1.500.500h3v2h-3zM0 4h4" fill="none" stroke="#fff"/><path d="M0 9h4l-2 2z" fill="#fff"/></svg>
    <svg width="13" height="13" viewBox="0 0 13 13"><path d="M0 0h13v13H0z" fill="#e9e9e9"/><path d="M1 4c2-2 9-2 11 0v2H8v6H5V6H1z" fill="#d81e1e"/></svg>
    <svg width="12" height="12" viewBox="0 0 12 12"><path d="M1 2h5v9H1z" fill="#ccc" stroke="#fff"/><path d="M8 2v2M10.500 2v2M7.500 4.500h4l-1 3h-2zM9.500 7v4" stroke="#fff" fill="#fff"/></svg>
    <svg width="12" height="12" viewBox="0 0 12 12"><path d="M0 4h2l4-4v11L2 8H0z" fill="#eee"/><circle cx="8.500" cy="8.500" r="3" fill="#fff" stroke="#d22" stroke-width="1.300"/><path d="M6.500 6.500l4 4" stroke="#d22"/></svg>
    <svg width="13" height="13" viewBox="0 0 13 13"><path d="M0 0h12v10H0z" fill="#8a9094"/><circle cx="8" cy="8" r="4.500" fill="#a52a20"/><circle cx="8" cy="8" r="2" fill="#d8604a"/></svg>
    <svg width="13" height="13" viewBox="0 0 13 13"><circle cx="6.500" cy="6.500" r="6" fill="#f3d21c"/><path d="M1 4a6 6 0 019-2L3 11A6 6 0 011 4z" fill="#6fb92c"/><path d="M6.500 3v7M3 6.500h7" stroke="#1d6b1a" stroke-width="2"/></svg>
    <svg width="11" height="10"><path d="M1 10V8M3.500 10V6.500M6 10V5M8 10V3M10 10V1" stroke="#fff" stroke-width="1.500"/></svg>
  </div>
  <div class="clock ms-2 me-1">17:48<br>2016/2/25</div>
  <div class="desk align-self-stretch"></div>
</footer>
</div>

<script>
const cols = [['A',89],['B',80],['C',72],['D',99],['E',64],['F',64],['G',64],['H',64],['I',64],['J',64],['K',64]];
const dd = p => `<span class="dd float-end d-flex align-items-center justify-content-center">${p}</span>`;
const funnel = '<svg width="8" height="7" viewBox="0 0 8 7"><path d="M1.500 0H8L5.700 3v4H4.300V3zM0 5.500h2V7H0z" fill="#444"/></svg>';
const data = {
  4:{B:['cur','是否已投资<span class="selbox"></span>'],C:['filt',dd(funnel)+'1'],D:['sel endcol','']},
  5:{B:['sel',''],C:['sel',''],D:['sel','']},
  6:{B:['head',dd('<i class="caret"></i>')+'行标签'],C:['head','计数项:星座'],D:['head','求和项:投资总额']},
  13:{B:['tot','总计'],C:['tot num','2464'],D:['tot num','503332300']}
};
[['a:20岁以下','5','38000'],['b:30岁以下','215','18242029'],['c:40岁以下','642','102204936'],['d:50岁以下','768','177070368'],['e:60岁以下','331','83526160'],['f:60岁及以上','503','122250807']]
.forEach((r,i)=>{const k=i<3?'selplain':'plain';data[7+i]={B:[k,r[0]],C:[k+' num',r[1]],D:[k+' num endcol',r[2]]};});
let h = '<colgroup><col width="28">'+cols.map(c=>`<col width="${c[1]}">`).join('')+'</colgroup><thead><tr><th><div class="corner"></div></th>';
h += cols.map(c=>`<th class="${'BCD'.includes(c[0])?'hot':''}">${c[0]}</th>`).join('')+'</tr></thead><tbody>';
for(let r=1;r<=28;r++){
  h += `<tr><th class="${r>3&&r<10?'hot':''}">${r}</th>`+cols.map(c=>{const d=data[r]&&data[r][c[0]];return d?`<td class="${d[0]}">${d[1]}</td>`:'<td></td>';}).join('')+'</tr>';
}
document.getElementById('sheet').innerHTML = h+'</tbody>';

document.getElementById('fields').innerHTML = [['年龄'],['性别'],['出生日期'],['年龄分段',1],['星座',1],['是否已投资',1,1],['投资次数'],['投资总额',1],['投资均额'],['投资次数2']]
.map((f,i)=>`<div class="form-check"><input class="form-check-input" type="checkbox" id="f${i}" ${f[1]?'checked':''}><label for="f${i}">${f[0]}</label>${f[2]?'<svg class="ms-auto me-1" width="10" height="10" fill="#888"><use href="#i-funnel"/></svg>':''}</div>`).join('');
const radios=(id,list,on)=>document.getElementById(id).innerHTML=list.map((t,i)=>`<div class="form-check"><input class="form-check-input" type="radio" name="${id}" id="${id}${i}" disabled ${i===on?'checked':''}><label for="${id}${i}">${t[0]}(<u>${t[1]}</u>)</label></div>`).join('');
radios('fill',[['无填充','N'],['纯色填充','S'],['渐变填充','G'],['图片或纹理填充','P'],['图案填充','A']],-1);
radios('line',[['无线条','N'],['实线','S'],['渐变线','G']],0);
</script>
<script src="https://cdn.jsdelivr.net/npm/bootstrap@5.3.0/dist/js/bootstrap.bundle.min.js"></script>
</body>
</html>
